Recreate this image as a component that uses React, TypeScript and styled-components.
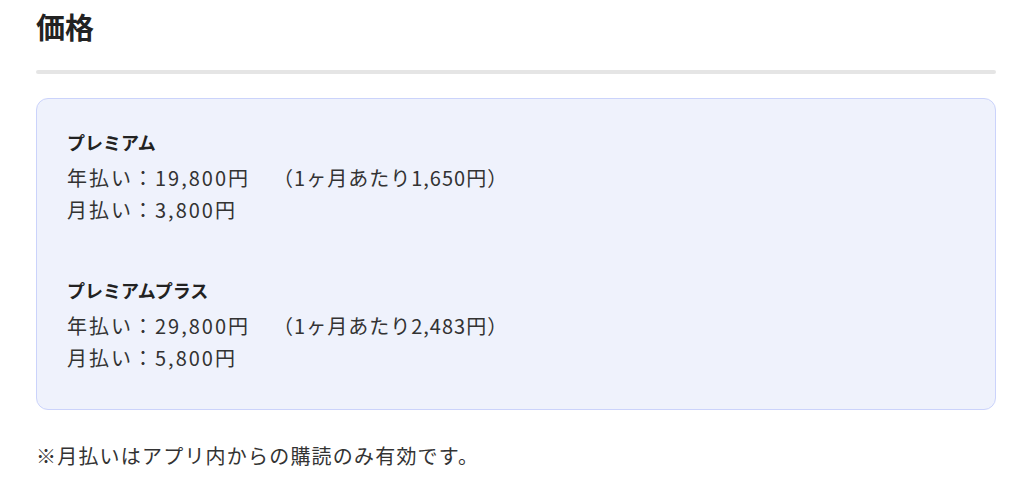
import styled, { createGlobalStyle } from "styled-components";

type Plan = {
  name: string;
  yearly: string;
  perMonth: string;
  monthly: string;
};

const plans: Plan[] = [
  { name: "プレミアム", yearly: "19,800円", perMonth: "1,650円", monthly: "3,800円" },
  { name: "プレミアムプラス", yearly: "29,800円", perMonth: "2,483円", monthly: "5,800円" },
];

const GlobalStyle = createGlobalStyle`
  body {
    margin: 0;
    background: #ffffff;
    font-family: "Noto Sans CJK JP", "Noto Sans", sans-serif;
    color: #333333;
  }
`;

const App = () => (
  <>
    <GlobalStyle />
    <Page>
      <Heading>価格</Heading>
      <Divider />
      <PriceCard>
        {plans.map((plan) => (
          <PlanBlock key={plan.name}>
            <PlanName>{plan.name}</PlanName>
            <PriceLine>
              年払い：{plan.yearly}
              <Note>（1ヶ月あたり{plan.perMonth}）</Note>
            </PriceLine>
            <PriceLine>月払い：{plan.monthly}</PriceLine>
          </PlanBlock>
        ))}
      </PriceCard>
      <Footnote>※月払いはアプリ内からの購読のみ有効です。</Footnote>
    </Page>
  </>
);

const Page = styled.div`
  padding: 6px 35px 0 36px;
`;

const Heading = styled.h2`
  margin: 0;
  color: #222222;
  font-size: 29px;
  font-weight: 700;
  line-height: 40px;
`;

const Divider = styled.hr`
  border: none;
  height: 4px;
  border-radius: 2px;
  background: #e5e5e5;
  margin: 24px 0 24px;
`;

const PriceCard = styled.div`
  background: #eff2fc;
  border: 1px solid #cbd3fb;
  border-radius: 12px;
  padding: 27px 30px 35px;
  display: flex;
  flex-direction: column;
  gap: 48px;
`;

const PlanBlock = styled.div`
  display: flex;
  flex-direction: column;
`;

const PlanName = styled.div`
  color: #222222;
  font-size: 18px;
  font-weight: 700;
  line-height: 32px;
  margin-bottom: 4px;
`;

const PriceLine = styled.div`
  font-size: 20px;
  line-height: 32px;
  letter-spacing: 2px;
`;

const Note = styled.span`
  margin-left: 23px;
  letter-spacing: 1px;
`;

const Footnote = styled.p`
  margin: 30px 0 0;
  font-size: 20px;
  line-height: 32px;
  letter-spacing: 1.2px;
  color: #333333;
`;

export default App;
